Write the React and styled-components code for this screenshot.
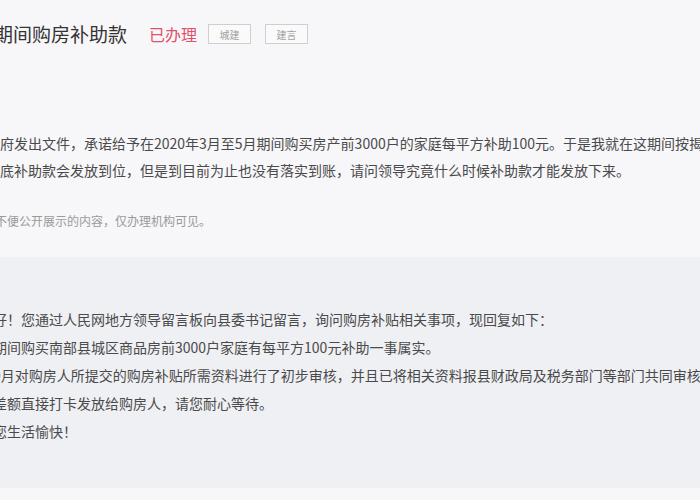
import styled, { createGlobalStyle } from "styled-components";

const GlobalStyle = createGlobalStyle`
  body {
    margin: 0;
    background: #f7f6f9;
    font-family: "Noto Sans CJK SC", "Noto Sans", sans-serif;
    overflow: hidden;
  }
`;

const body = [
  "县政府发出文件，承诺给予在2020年3月至5月期间购买房产前3000户的家庭每平方补助100元。于是我就在这期间按揭购买了一套住房，",
  "到年底补助款会发放到位，但是到目前为止也没有落实到账，请问领导究竟什么时候补助款才能发放下来。",
];

const reply = [
  "您好！您通过人民网地方领导留言板向县委书记留言，询问购房补贴相关事项，现回复如下：",
  "该期间购买南部县城区商品房前3000户家庭有每平方100元补助一事属实。",
  "于9月对购房人所提交的购房补贴所需资料进行了初步审核，并且已将相关资料报县财政局及税务部门等部门共同审核，审核通过后",
  "将差额直接打卡发放给购房人，请您耐心等待。",
  "祝您生活愉快！",
];

function App() {
  return (
    <Page>
      <GlobalStyle />
      <Header>
        <Title>疫情期间购房补助款</Title>
        <Status>已办理</Status>
        <Tag>城建</Tag>
        <Tag>建言</Tag>
      </Header>

      <Message>
        {body.map((line) => (
          <Line key={line}>{line}</Line>
        ))}
      </Message>

      <Note>此为不便公开展示的内容，仅办理机构可见。</Note>

      <Reply>
        {reply.map((line) => (
          <Line key={line} $tall>
            {line}
          </Line>
        ))}
      </Reply>
    </Page>
  );
}

export default App;

const Page = styled.div`
  width: 700px;
  height: 500px;
  overflow: hidden;
`;

const Header = styled.div`
  display: flex;
  align-items: center;
  margin-left: -44px;
  padding-top: 22px;
  height: 24px;
  white-space: nowrap;
`;

const Title = styled.h1`
  margin: 0;
  font-size: 19px;
  font-weight: 400;
  line-height: 24px;
  color: #333;
`;

const Status = styled.span`
  margin-left: 22px;
  font-size: 16px;
  color: #e2506a;
`;

const Tag = styled.span`
  display: inline-flex;
  align-items: center;
  justify-content: center;
  box-sizing: border-box;
  width: 43px;
  height: 20px;
  margin-left: 11px;
  border: 1px solid #cfcfcf;
  background: #fafafa;
  font-size: 10px;
  color: #a0a0a0;

  & + & {
    margin-left: 14px;
  }
`;

const Message = styled.div`
  margin-top: 84px;
  margin-left: -28px;
`;

const Line = styled.p`
  margin: 0;
  white-space: nowrap;
  font-size: 14px;
  line-height: ${(p) => (p.$tall ? "28px" : "27px")};
  color: #4a4a4a;
`;

const Note = styled.p`
  margin: 27px 0 0 -29px;
  white-space: nowrap;
  font-size: 12px;
  line-height: 20px;
  color: #9a9a9a;
`;

const Reply = styled.section`
  margin-top: 26px;
  padding: 48px 0 43px;
  background: #eff0f4;

  & > p {
    margin-left: -21px;
  }
`;
